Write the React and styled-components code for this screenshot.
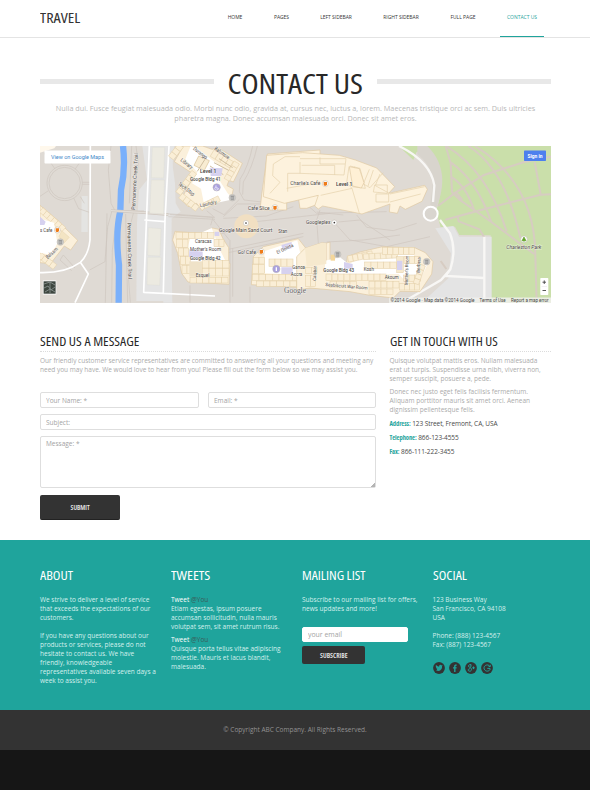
import React from 'react';
import styled, { createGlobalStyle, css } from 'styled-components';

const teal = '#1fa49c';
const ink = '#333';

const Global = createGlobalStyle`
  * { box-sizing: border-box; }
  body { margin: 0; background: #fff; font: 6.5px/9px "Open Sans", sans-serif; color: #ababab; }
  h1, h2, p { margin: 0; font-weight: 400; }
  a { color: inherit; text-decoration: none; }
`;

const Page = styled.div`width: 590px; min-height: 790px; background: #161616;`;
const Header = styled.header`
  display: flex; justify-content: space-between; height: 38px; padding: 0 46px 0 40px;
  background: #fff; border-bottom: 1.5px solid #e4e4e4;
`;
const Caps = styled.span`
  display: inline-block; font-stretch: 75%; white-space: nowrap;
  transform: scaleX(${p => p.$wide}); transform-origin: ${p => p.$from || 'left'} center;
`;
const Logo = styled.a`font-size: 13.6px; line-height: 35px; color: ${ink};`;
const Nav = styled.nav`display: flex; height: 37px;`;
const NavLink = styled.a`
  width: ${p => p.$w}px; margin-left: ${p => p.$gap}px; text-align: center; white-space: nowrap;
  font-size: 4.97px; line-height: 35px; color: ${p => (p.$active ? teal : ink)};
  border-bottom: 1.5px solid ${p => (p.$active ? teal : 'transparent')};
`;

const Main = styled.main`height: 502px; padding: 32px 39px 0 40px; background: #fff;`;
const TitleRow = styled.div`
  display: flex; align-items: center; justify-content: space-between; height: 28px;
  &::before, &::after { content: ''; width: 174px; height: 5px; margin-top: -5px; background: #e8e8e8; }
`;
const Title = styled.h1`
  margin-top: -2px; font-size: 28px; line-height: 28px; color: #282828; white-space: nowrap;
`;
const Intro = styled.p`
  margin-top: 5px; height: 43px; font-size: 7.26px; line-height: 10px; text-align: center; white-space: nowrap; color: #b8b8b8;
`;
const MapFrame = styled.svg`
  display: block; width: 511px; height: 157px; background: #dfdad4;
  font-family: Roboto, sans-serif; font-size: 16px;
`;
const Columns = styled.div`display: grid; grid-template-columns: 336px 161px; column-gap: 13.5px; margin-top: 30px;`;
const heading = css`font-size: 12.8px; line-height: 16px; white-space: nowrap;`;
const SectionTitle = styled.h2`
  ${heading}
  height: 19px; margin-bottom: 4px; color: #282828; border-bottom: 1px dotted #dcdcdc;
`;
const Text = styled.p`white-space: nowrap; margin-bottom: ${p => p.$after ?? 4}px; color: ${p => p.$color || 'inherit'};`;
const Label = styled.strong`color: ${teal}; font-stretch: 75%; font-size: 6.5px;`;
const Detail = styled(Text)`color: #4a4a4a; letter-spacing: -0.08px;`;

const Form = styled.form`display: grid; grid-template-columns: 159px 168px; column-gap: 9px; row-gap: 6px; margin-top: 18px;`;
const fieldStyle = css`
  display: block; width: 100%; height: 16px; padding: 0 5px; border: 1px solid #dedede; border-radius: 2px;
  background: #fff; font: 6.5px/12px "Open Sans", sans-serif; outline: 0;
  &::placeholder { color: #a3a3a3; opacity: 1; }
`;
const Field = styled.input`${fieldStyle} grid-column: ${p => (p.$wide ? '1 / -1' : 'auto')};`;
const MessageField = styled.textarea`${fieldStyle} height: 52px; padding-top: 1px; resize: none;`;
const MessageWrap = styled.div`
  grid-column: 1 / -1; position: relative;
  &::after {
    content: ''; position: absolute; right: 1px; bottom: 1px; width: 4px; height: 4px;
    background: linear-gradient(135deg, transparent 50%, #b4b4b4 50%);
  }
`;
const Button = styled.button`
  display: block; width: ${p => p.$w}px; height: ${p => p.$h}px; padding: 1px 0 0; border: 0; border-radius: 2px;
  background: ${ink}; color: #eee; font: 600 6.4px/9px "Open Sans", sans-serif;
`;
const SubmitButton = styled(Button)`margin-top: 1px; border-bottom: 1px solid #222;`;
const Subscribe = styled.form`display: grid; row-gap: 4px; margin-top: 14px;`;
const EmailField = styled(Field)`width: 106px; height: 15px; border-color: #fff; font-size: 6.9px;`;

const Footer = styled.footer`
  display: grid; grid-template-columns: 131px 131px 130.5px 1fr; height: 170px; padding: 27px 0 0 40px;
  background: ${teal}; color: #d5f0ed;
`;
const FooterTitle = styled.h2`${heading} margin-bottom: 12px; color: #fff;`;
const Handle = styled.span`color: #3b5b59;`;
const White = styled.span`color: #fff;`;
const SocialIcons = styled.div`display: flex; gap: 4.2px; margin-top: 13px;`;
const Round = styled.svg`display: block; width: 12px; height: 12px;`;
const Copyright = styled.div`height: 40px; background: ${ink}; color: #929292; text-align: center; line-height: 40px;`;

const links = [
  ['HOME', 15, 0], ['PAGES', 16, 31], ['LEFT SIDEBAR', 33, 30],
  ['RIGHT SIDEBAR', 36, 30.5], ['FULL PAGE', 27, 30.5], ['CONTACT US', 44, 23.5, true],
];

/* Small rooms along a building wing, drawn as a row of cells. */
function Cells({ x, y, n, w = 15, h = 18, angle = 0, color = '#faeed6' }) {
  return (
    <g transform={`translate(${x} ${y}) rotate(${angle})`} fill={color} stroke="#e4d0aa" strokeWidth="1.6">
      {Array.from({ length: n }, (_, i) => <rect key={i} x={i * w} y="0" width={w} height={h} />)}
    </g>
  );
}

function T({ x, y, r = 0, w, children, ...rest }) {
  return (
    <text x={x} y={y} transform={r ? `rotate(${r} ${x} ${y})` : undefined} textLength={w}
      lengthAdjust="spacingAndGlyphs" fill="#4b4744" stroke="#fff" strokeWidth="3" strokeOpacity="0.5" paintOrder="stroke" {...rest}>
      {children}
    </text>
  );
}

const Pin = ({ x, y, c, r = 9, children }) => (
  <g transform={`translate(${x} ${y})`}>
    <circle r={r} fill={c} stroke="#bdb6ae" strokeWidth="1.5" />
    {children}
  </g>
);
const Food = p => <Pin {...p} c="#fff"><path d="M-5-5H5V3L2 6H-3L-5 3Z" fill="#ee7c1a" /></Pin>;
const Bin = p => <Pin {...p} r={10} c="#cfcfcd"><path d="M-4-4H4V6H-4ZM-6-5H6M-1-4V6M2-4V6" stroke="#858585" strokeWidth="1.5" fill="none" /></Pin>;
const Dot = p => <Pin {...p} r={8} c="#fff"><circle r="2.5" fill="#3c3835" /></Pin>;

function CampusMap() {
  return (
    <MapFrame viewBox="40 146 511 157" preserveAspectRatio="none">
      {/* west side: creek, parking lots, trail */}
      <g transform="translate(35 140) scale(.33333)" fill="none">
        <path d="M322 18H418L412 70 420 130 422 190 437 215 410 235 408 483 304 483 306 250 312 150 336 120Z" fill="#e4e4e4" />
        <path d="M385 18H415L407 210 412 488H385Z" fill="#e4e4e4" />
        <path d="M140 168H158V276H139Z" fill="#e4e4e2" />
        <g stroke="#cdc6be" strokeWidth="2">
          <circle cx="89" cy="129" r="53" /><circle cx="89" cy="129" r="47" />
          <path d="M60 87 28 40M120 88 150 45M142 127H165M142 133H165M39 153 15 169M116 174 131 206 163 217M136 170 148 190" />
          <path d="M228 18 220 90 228 190 240 212 328 219M230 216 218 260 210 365 164 390M216 220 211 488M228 213H327M246 220 232 330 230 488M303 18 310 70 302 130 300 200 285 260 278 380 286 488M85 345 120 384M75 360 110 392M85 345 75 360" />
          <path d="M355 219 440 224 540 232M400 230 540 238M290 18 283 190M272 222 278 488" />
        </g>
        <path d="M264 18C269 60 267 110 258 150L256 214C245 260 244 310 252 375L251 488" stroke="#7ab0fb" strokeWidth="19" />
        <path d="M228 212 328 218 400 224" stroke="#d0c8c0" strokeWidth="8" />
        <path d="M228 212 328 218 400 224" stroke="#e3ded8" strokeWidth="4" />
        <g fill="#eceae1" stroke="#dcdad2"><path d="M352 22H389L386 114 349 113ZM349 120H388L386 222 344 219ZM340 263 378 266 375 348 338 346ZM338 352H378L374 436 336 434Z" /></g>
        <path d="M166 18 165 300Q160 345 136 367 90 400 15 398M136 367 160 402 120 488M343 18 326 457 540 468M402 18 390 240 385 460M328 240 391 245" stroke="#fff" strokeWidth="5" strokeLinejoin="round" />
        <path d="M15 196 74 246 83 257 128 301 107 330 88 318 52 364 38 370 15 368Z" fill="#fbf0db" stroke="#dfc8a2" strokeWidth="2" />
        <Cells x="24" y="203" n={6} w={15} h={17} angle={41} />
        <Cells x="18" y="337" n={4} w={15} h={18} angle={38} />
        <path d="M15 236 57 248 67 310 50 345 15 338Z" fill="#fff" />
        <path d="M80 272 103 292 88 308 72 290Z" fill="#f3e4c3" stroke="#dfc8a2" />
        <path d="M15 230 32 245 28 255H15Z" fill="#d6d1ef" />
        <path d="M15 18H63L58 25 15 38Z" fill="#fff8ec" />
        <Food x={67} y={270} /><Bin x={76} y={306} />
        <T x={15} y={275} w={37}>s Cafe</T><T x={38} y={358} r={-43} w={43}>Balsam</T>
        <T x={300} y={210} r={-87} w={170}>Permanente Creek Trail</T>
        <T x={277} y={248} r={89} w={169}>Permanente Creek Trail</T>
      </g>

      {/* park and eastern lots */}
      <g transform="translate(420 140) scale(.33333)" fill="none">
        <path d="M-64 18H394V488H210L212 286 118 285 105 260 62 262 48 214Q82 120 22 40L-10 35-20 60Z" fill="#cadfaa" />
        <path d="M22 18Q95 90 49 204L30 200 40 120Q30 70-8 42V18Z" fill="#d8d4cd" />
        <path d="M46 265 100 258 117 290H215V475L5 488 85 415 93 340Z" fill="#e4e4e4" />
        <g stroke="#d7ccc2" strokeWidth="6">
          <path d="M54 198 106 158 192 105 310 67 394 50M76 239 194 207 362 164 394 163M344 66 362 163M77 18 92 70 96 156 120 180 214 246 342 342M78 18Q202 92 260 274M92 67Q170 120 214 246M96 112Q140 140 163 213M145 18Q256 88 301 294M165 18Q345 130 346 345L350 488M113 229 116 244 178 268 193 292M109 158 127 180" />
          <path d="M62 363 79 387" />
        </g>
        <path d="M-63 18Q32 65 43 136L39 186M60 240 90 280Q110 330 91 388L63 420-40 480M91 388 77 408 192 414M193 290V488" stroke="#f8f7f5" strokeWidth="7" />
        <circle cx="32" cy="221" r="21" fill="#d9d5cf" stroke="#fff" strokeWidth="6" />
        <Pin x={312} y={298} r={10} c="#fff"><path d="M0-7 6 4H-6ZM0 4V8" fill="#61a329" stroke="#61a329" strokeWidth="2" /></Pin>
        <T x={259} y={326} w={105} fontStyle="italic" fontSize="15">Charleston Park</T>
      </g>

      {/* buildings 41, 42 and the sand court */}
      <g transform="translate(170 140) scale(.33333)" fill="none">
        <g stroke="#cec6be" strokeWidth="2">
          <path d="M248 18Q235 80 210 118L208 155 222 180 276 186M262 18Q247 84 220 126L218 164M128 206 162 224 208 178M110 212 130 229 122 256M160 230 202 192H276M145 285 250 246 480 220M175 328 400 280M175 338 400 290M180 300V488M188 325V470M160 235 290 228 370 200M0 224 128 232M130 240 178 300M415 198 440 220 650 215M60 436V488M240 440V488" />
        </g>
        <circle cx="229" cy="259" r="36" fill="#f1dfc2" />
        <path d="M40 18H98L126 28 148 25 217 70 202 102 190 126 177 121 171 137 190 147 183 180 164 165 140 191 108 201 96 212 80 190 54 200 34 178 54 139 75 105 13 65Z" fill="#fbf0db" stroke="#dfc8a2" strokeWidth="2" />
        <path d="M62 18 85 28 126 60 156 82 142 111 173 160 190 178 135 190 101 187 93 146 66 130 82 97 46 58Z" fill="#fff" />
        <Cells x="40" y="22" n={3} w={16} h={19} angle={128} />
        <Cells x="132" y="30" n={5} w={17} h={22} angle={31} />
        <Cells x="208" y="72" n={4} w={15} h={18} angle={120} />
        <Cells x="80" y="102" n={5} w={16} h={18} angle={127} />
        <Cells x="37" y="160" n={4} w={16} h={18} angle={38} />
        <Cells x="98" y="190" n={3} w={17} h={17} angle={-26} />
        <path d="M86 48 118 62 103 91 72 76Z" fill="#f8ecd2" stroke="#d9c196" strokeWidth="2" />
        <path d="M132 68 176 91M120 78 160 104M110 50 82 94M147 56 188 83" stroke="#cfbea0" strokeWidth="3" />
        <path d="M119 83 158 85 154 108 122 108Z" fill="#d6d1ef" />
        <path d="M15 274 92 280 128 264 146 268 160 298 176 323V370H180L177 433 54 426 35 400 23 340 8 300Z" fill="#fbf0db" stroke="#dfc8a2" strokeWidth="2" />
        <path d="M62 292 125 264 150 330 165 360 62 368 50 330Z" fill="#fff" />
        <Cells x="18" y="278" n={6} w={19} /><Cells x="20" y="298" n={2} w={17} h={24} /><Cells x="26" y="324" n={2} h={24} /><Cells x="31" y="350" n={2} h={24} /><Cells x="36" y="376" n={2} h={24} />
        <Cells x="97" y="362" n={4} w={20} h={22} /><Cells x="97" y="386" n={4} w={20} h={22} /><Cells x="60" y="412" n={6} w={19} h={17} /><Cells x="132" y="298" n={2} w={15} h={22} />
        <path d="M58 364H96V410H58Z" fill="#efe2c8" /><path d="M58 328 98 335V351H57ZM134 275H148V288H134Z" fill="#d6d1ef" />
        <path d="M292 42 450 30V190L410 205H390L385 172 350 185V210H270L275 165Z" fill="#fdf2dd" stroke="#dfc8a2" strokeWidth="2" />
        <path d="M310 75 345 50H450M310 75 308 110 330 130 300 170 335 178 353 158V100H390V66M350 130H450M385 172 450 165" stroke="#dfc8a2" strokeWidth="2" />
        <path d="M250 350 280 320 385 296 410 328 450 315 480 306V372H450V446L244 434Z" fill="#fbf0db" stroke="#dfc8a2" strokeWidth="2" />
        <path d="M283 334 382 301 390 336 412 344V376L450 380V406L285 400Z" fill="#fff" />
        <Cells x="250" y="352" n={2} w={17} h={20} /><Cells x="247" y="374" n={2} w={18} h={26} /><Cells x="247" y="404" n={10} w={20} h={17} /><Cells x="260" y="423" n={9} w={20} h={16} /><Cells x="297" y="357" n={4} w={18} h={22} /><Cells x="410" y="330" n={2} w={18} h={26} />
        <path d="M334 382H368V402H334ZM334 315 365 306V325L338 330Z" fill="#d6d1ef" />
        <Pin x={140} y={142} r={11} c="#a9a0df"><path d="M-2-6V2H4L6 6M-3-1A5 5 0 1 0 4 5" stroke="#fff" strokeWidth="2" /></Pin>
        <Pin x={319} y={387} r={11} c="#a9a0df"><path d="M0-5V6" stroke="#fff" strokeWidth="4" /></Pin>
        <Bin x={187} y={173} /><Food x={315} y={203} /><Food x={274} y={335} /><Dot x={228} y={249} />
        <T x={68} y={28} r={38} w={50}>Durango</T><T x={132} y={28} r={36} w={52}>Baltimore</T><T x={30} y={62} r={38} w={43}>Library</T>
        <T x={23} y={134} r={37} w={57}>Tech Stop</T><T x={91} y={202} r={-13} w={51}>Laundry</T>
        <T x={90} y={98} w={49} fontWeight="600" fontSize="17">Level 1</T><T x={60} y={124} w={92} fontWeight="500">Google Bldg 41</T>
        <T x={234} y={209} w={65}>Cafe Slice</T><T x={147} y={275} w={160}>Google Main Sand Court</T>
        <T x={325} y={280} w={27} fontSize="14">Stan</T><T x={203} y={341} w={55}>Go! Cafe</T><T x={75} y={309} w={50} fontSize="14">Caracas</T>
        <T x={60} y={333} w={93} fontSize="15">Mother's Room</T><T x={60} y={360} w={92} fontWeight="500">Google Bldg 42</T><T x={77} y={410} w={41} fontSize="14">Esquel</T>
        <T x={322} y={342} r={-25} w={54} fontSize="14">El Goleta</T>
      </g>

      {/* building 40 and 43 */}
      <g transform="translate(300 140) scale(.33333)" fill="none">
        <path d="M60 210 50 240 55 310M105 250 150 300 260 320 390 290M170 225 200 262 280 272 350 250M115 246 180 240 270 300M80 306 190 300 300 285M50 216 130 225" stroke="#cec6be" strokeWidth="2" />
        <path d="M-100 46 8 38 118 46 166 60 230 84 284 140 266 160 374 136 382 148 366 184 316 208 300 198 292 220 268 216 270 192 186 222 68 198 55 207 44 198 55 166-46 190-110 170Z" fill="#fdf2dd" stroke="#dfc8a2" strokeWidth="2" />
        <path d="M0 56H138L132 105 0 100M5 76H104V105M60 52V72H135M62 166 156 145 178 220M147 80 140 128 156 145M150 78 180 85 196 145 156 140M164 80 158 138M208 88 190 132 210 143 250 98M220 90 204 138M240 102 226 137 268 160M224 135H262V160L220 156ZM228 162H266V186H228ZM270 162 374 140M270 186 362 162M-40 145 30 132 60 125M-80 72-45 50H0M-80 72-82 107-60 127-90 160M-37 155V100H0V66" stroke="#e4d0aa" strokeWidth="2" />
        <path d="M148 80 178 86 192 128 184 144 158 138Z" fill="#fff0d5" stroke="#dfc8a2" strokeWidth="2" />
        <path d="M15 325 66 308 79 310V370H140L142 350 180 336 248 320 346 324 376 338 399 365 395 402 360 455 300 454 280 474 210 466 150 455 30 444-10 450V350Z" fill="#fbf0db" stroke="#dfc8a2" strokeWidth="2" />
        <path d="M75 362 120 352 146 372 192 350 340 340 354 378 382 374 365 410 320 428 296 402 140 405 75 396Z" fill="#fff" />
        <path d="M15 325 66 308 79 310V372L20 380Z" fill="#f6e9ce" />
        <Cells x="142" y="348" n={5} w={15} h={19} angle={-12} /><Cells x="190" y="342" n={6} w={17} h={17} angle={-3} /><Cells x="247" y="322" n={6} w={16} h={22} />
        <Cells x="194" y="366" n={5} w={19} h={20} /><Cells x="290" y="350" n={1} w={20} h={48} color="#f6e9ce" /><Cells x="312" y="349" n={3} w={16} h={22} />
        <Cells x="78" y="402" n={10} w={18} h={20} /><Cells x="90" y="424" n={4} w={20} h={18} /><Cells x="207" y="425" n={5} w={18} h={19} /><Cells x="207" y="447" n={4} w={18} h={17} /><Cells x="310" y="405" n={3} w={17} h={20} /><Cells x="298" y="430" n={4} w={15} h={20} /><Cells x="376" y="378" n={4} w={15} h={17} angle={110} /><Cells x="17" y="382" n={2} w={17} h={19} /><Cells x="17" y="407" n={2} w={15} h={33} />
        <path d="M132 366 158 372V386H132ZM291 362H307V390H291Z" fill="#d6d1ef" /><path d="M92 344H105V362H92Z" fill="#f5d79b" />
        <Food x={76} y={131} /><Dot x={103} y={248} /><Bin x={113} y={343} /><Bin x={380} y={365} />
        <T x={-29} y={136} w={90}>Charlie's Cafe</T><T x={108} y={137} w={49} fontWeight="600" fontSize="17">Level 1</T><T x={18} y={253} w={73}>Googleplex</T>
        <T x={-23} y={388} w={38} fontSize="14">Ganoa</T><T x={-28} y={407} w={35} fontSize="14">Accra</T>
        <T x={70} y={396} w={92} fontWeight="500">Google Bldg 43</T><T x={191} y={393} w={31} fontSize="14">Kosh</T><T x={254} y={416} w={42} fontSize="14">Akoum</T>
        <T x={76} y={438} r={5} w={127} fontSize="14">Seabiscuit War Room</T><T x={48} y={422} r={-88} w={44} fontSize="14">Calabar</T><T x={323} y={435} r={-88} w={88} fontSize="14">Mother's Room</T><T x={359} y={398} r={-86} w={46} fontSize="14">Berbera</T>
        <T x={-48} y={458} w={66} fontFamily="Liberation Serif" fontSize="25" fill="#666">Google</T>
      </g>

      {/* map controls */}
      <rect x="44.5" y="150.5" width="66" height="13" rx="0.7" fill="#fff" />
      <text x="51" y="159" fontSize="5.6" textLength="53" lengthAdjust="spacingAndGlyphs" fill="#4288c8">View on Google Maps</text>
      <rect x="524" y="150.5" width="22" height="10.5" rx="0.7" fill="#4d80ee" />
      <text x="527.5" y="157.8" fontSize="5.2" fontWeight="700" textLength="15" lengthAdjust="spacingAndGlyphs" fill="#fff">Sign in</text>
      <rect x="42.8" y="280.5" width="13.5" height="14" fill="#fff" />
      <rect x="43.6" y="281.3" width="12" height="12.4" fill="#3e4740" />
      <path d="M44 284 50 282 55 285M44 288 48 286 51 290 55 287M45 292 50 289 55 292M50 282V293" stroke="#87908d" strokeWidth="0.9" fill="none" />
      <rect x="540.3" y="278" width="8" height="17" rx="0.7" fill="#fff" />
      <path d="M542.5 282.2H546M544.25 280.4V284M542.5 290.5H546" stroke="#444" strokeWidth="0.9" />
      <path d="M541.5 286.5H547" stroke="#ddd" strokeWidth="0.4" />
      <rect x="389" y="297.5" width="162" height="5.5" fill="#f1f1ee" opacity="0.82" />
      <g fontSize="4.7" fill="#444">
        <text x="390.5" y="301.7" textLength="84" lengthAdjust="spacingAndGlyphs">©2014 Google · Map data ©2014 Google</text>
        <text x="479.5" y="301.7" textLength="26" lengthAdjust="spacingAndGlyphs">Terms of Use</text>
        <text x="511" y="301.7" textLength="37.5" lengthAdjust="spacingAndGlyphs">Report a map error</text>
      </g>
    </MapFrame>
  );
}

const glyphs = {
  twitter: <path d="M3 8.2C7.3 10.6 9.5 6.5 9 4.3L9.8 3.3 8.8 3.4C7.5 2.1 6 3.2 6.1 4.5 4.8 4.5 3.8 3.9 3 3 2.5 4 2.8 4.9 3.5 5.4L2.9 5.3C3 6.2 3.6 6.8 4.4 7L4 7.1C4.2 7.8 3.8 8.2 3 8.2Z" fill={teal} />,
  facebook: <path d="M5.1 10V6.6H4V5.3H5.1V4.2C5.1 2.9 6 2.3 7.7 2.5V3.7C6.7 3.6 6.5 3.8 6.5 4.4V5.3H7.7L7.5 6.6H6.5V10Z" fill={teal} />,
  plus: <path d="M6.3 2.7H4.7C3 2.9 3.1 5.3 4.8 5.2 6.7 5.1 6.3 2.7 5 2.8M5 5.2 6 6.2C7.3 8 5.9 9.3 4.6 9.2 2.5 9.1 2.8 6.6 5.2 6.7M7.2 5.8H9.8M8.5 4.5V7.1" stroke={teal} strokeWidth="1" fill="none" />,
  g: <path d="M8.8 4.3C7.2 2 3.4 2.8 3 5.7 2.8 9.2 7.5 10.4 9 7.5V6.4H6.3M7.6 4.4 9.3 4.5 9.2 2.8" stroke={teal} strokeWidth="1" fill="none" />,
};
const SocialIcon = ({ name }) => <Round viewBox="0 0 12 12"><circle cx="6" cy="6" r="5.9" fill={ink} />{glyphs[name]}</Round>;

export default function App() {
  return (
    <Page>
      <Global />
      <Header>
        <Logo href="#"><Caps $wide={1.2}>TRAVEL</Caps></Logo>
        <Nav>{links.map(([t, w, gap, on]) => <NavLink key={t} href="#" $w={w} $gap={gap} $active={on}>{t}</NavLink>)}</Nav>
      </Header>
      <Main>
        <TitleRow><Title><Caps $wide={1.125} $from="center">CONTACT US</Caps></Title></TitleRow>
        <Intro>
          Nulla dui. Fusce feugiat malesuada odio. Morbi nunc odio, gravida at, cursus nec, luctus a, lorem. Maecenas tristique orci ac sem. Duis ultricies<br />
          pharetra magna. Donec accumsan malesuada orci. Donec sit amet eros.
        </Intro>
        <CampusMap />
        <Columns>
          <section>
            <SectionTitle><Caps $wide={1.09}>SEND US A MESSAGE</Caps></SectionTitle>
            <Text>
              Our friendly customer service representatives are committed to answering all your questions and meeting any<br />
              need you may have. We would love to hear from you! Please fill out the form below so we may assist you.
            </Text>
            <Form>
              <Field placeholder="Your Name: *" />
              <Field placeholder="Email: *" />
              <Field $wide placeholder="Subject:" />
              <MessageWrap><MessageField placeholder="Message: *" /></MessageWrap>
              <SubmitButton type="button" $w={80} $h={25}><Caps $wide={1.05} $from="center">SUBMIT</Caps></SubmitButton>
            </Form>
          </section>
          <section>
            <SectionTitle><Caps $wide={1.05}>GET IN TOUCH WITH US</Caps></SectionTitle>
            <Text>Quisque volutpat mattis eros. Nullam malesuada<br />erat ut turpis. Suspendisse urna nibh, viverra non,<br />semper suscipit, posuere a, pede.</Text>
            <Text $after={5}>Donec nec justo eget felis facilisis fermentum.<br />Aliquam porttitor mauris sit amet orci. Aenean<br />dignissim pellentesque felis.</Text>
            <Detail $after={5}><Label>Address:</Label> 123 Street, Fremont, CA, USA</Detail>
            <Detail $after={5}><Label>Telephone:</Label> 866-123-4555</Detail>
            <Detail><Label>Fax:</Label> 866-111-222-3455</Detail>
          </section>
        </Columns>
      </Main>
      <Footer>
        <section>
          <FooterTitle><Caps $wide={1.1}>ABOUT</Caps></FooterTitle>
          <Text $after={9}>We strive to deliver a level of service<br />that exceeds the expectations of our<br />customers.</Text>
          <Text>If you have any questions about our<br />products or services, please do not<br />hesitate to contact us. We have<br />friendly, knowledgeable<br />representatives available seven days a<br />week to assist you.</Text>
        </section>
        <section>
          <FooterTitle><Caps $wide={1.15}>TWEETS</Caps></FooterTitle>
          <Text><White>Tweet</White> <Handle>@You</Handle><br />Etiam egestas, ipsum posuere<br />accumsan sollicitudin, nulla mauris<br />volutpat sem, sit amet rutrum risus.</Text>
          <Text><White>Tweet</White> <Handle>@You</Handle><br />Quisque porta tellus vitae adipiscing<br />molestie. Mauris et lacus blandit,<br />malesuada.</Text>
        </section>
        <section>
          <FooterTitle><Caps $wide={1.07}>MAILING LIST</Caps></FooterTitle>
          <Text $after={0}>Subscribe to our mailing list for offers,<br />news updates and more!</Text>
          <Subscribe>
            <EmailField placeholder="your email" />
            <Button type="button" $w={63} $h={18}><Caps $wide={1.08} $from="center">SUBSCRIBE</Caps></Button>
          </Subscribe>
        </section>
        <section>
          <FooterTitle><Caps $wide={1.09}>SOCIAL</Caps></FooterTitle>
          <Text $after={9}>123 Business Way<br />San Francisco, CA 94108<br />USA</Text>
          <Text $after={0}>Phone: (888) 123-4567<br />Fax: (887) 123-4567</Text>
          <SocialIcons>{Object.keys(glyphs).map(n => <SocialIcon key={n} name={n} />)}</SocialIcons>
        </section>
      </Footer>
      <Copyright>© Copyright ABC Company. All Rights Reserved.</Copyright>
    </Page>
  );
}
